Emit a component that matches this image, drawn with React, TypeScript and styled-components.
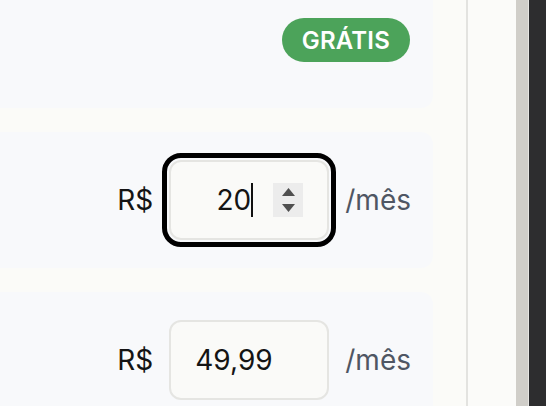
import React from "react";
import styled, { createGlobalStyle } from "styled-components";

const GlobalStyle = createGlobalStyle`
  html, body {
    margin: 0;
    padding: 0;
    background: #fbfbf8;
    overflow: hidden;
  }
  body {
    font-family: Inter, "Noto Sans", "Liberation Sans", sans-serif;
    -webkit-font-smoothing: antialiased;
  }
`;

const Shell = styled.div`
  display: flex;
  width: 546px;
  height: 406px;
  overflow: hidden;
  background: #fbfbf8;
`;

const Main = styled.main`
  flex: 1;
  min-width: 0;
  display: flex;
  flex-direction: column;
  gap: 24px;
  margin-top: -28px;
  padding-right: 33px;
`;

const Card = styled.section`
  margin-left: -24px;
  background: #f8f9fb;
  border-radius: 12px;
  padding: 28px 22px 28px 24px;
  display: flex;
  justify-content: flex-end;
  align-items: center;
`;

const Row = styled.div`
  height: 80px;
  display: flex;
  align-items: center;
  gap: 16px;
`;

const Badge = styled.span`
  display: inline-flex;
  align-items: center;
  height: 44px;
  box-sizing: border-box;
  margin-right: 1px;
  padding: 0 20px;
  border-radius: 999px;
  background: #4ca35a;
  color: #ffffff;
  font-size: 24px;
  font-weight: 600;
  letter-spacing: 0.2px;
`;

const Currency = styled.span`
  font-size: 28px;
  color: #141414;
`;

const Period = styled.span`
  font-size: 28px;
  color: #4f5663;
`;

const Field = styled.div<{ $focused?: boolean }>`
  box-sizing: border-box;
  width: 160px;
  height: 80px;
  display: flex;
  align-items: center;
  padding: 0 24px;
  border: 2px solid #e5e5e2;
  border-radius: 12px;
  background: #fafaf8;
  font-size: 28px;
  color: #141414;
  outline: ${(p) => (p.$focused ? "5px solid #000" : "none")};
  outline-offset: 2px;
`;

const Value = styled.span<{ $align?: "left" | "right" }>`
  flex: 1;
  text-align: ${(p) => p.$align ?? "left"};
`;

const Caret = styled.span`
  width: 2px;
  height: 34px;
  background: #111;
`;

const Spinner = styled.span`
  margin-left: 20px;
  width: 30px;
  height: 34px;
  background: #ececec;
  display: flex;
  flex-direction: column;
  align-items: center;
  justify-content: center;
  gap: 8px;
`;

const Aside = styled.aside`
  width: 48px;
  border-left: 2px solid #e3e3e0;
  background: #fbfbf9;
`;

const Track = styled.div`
  width: 12px;
  background: #d0cec9;
`;

const Dark = styled.div`
  width: 17px;
  border-left: 1px solid #e6e5e2;
  background: #2d2d2f;
`;

const Arrow = ({ up }: { up?: boolean }) => (
  <svg width="13" height="8" viewBox="0 0 13 8">
    <path d={up ? "M6.5 0 L13 8 L0 8 Z" : "M0 0 L13 0 L6.5 8 Z"} fill="#4f4f4f" />
  </svg>
);

const PriceRow = ({ value, focused }: { value: string; focused?: boolean }) => (
  <Row>
    <Currency>R$</Currency>
    <Field $focused={focused}>
      {focused ? (
        <>
          <Value $align="right">{value}</Value>
          <Caret />
          <Spinner>
            <Arrow up />
            <Arrow />
          </Spinner>
        </>
      ) : (
        <Value>{value}</Value>
      )}
    </Field>
    <Period>/mês</Period>
  </Row>
);

export default function App() {
  return (
    <>
      <GlobalStyle />
      <Shell>
        <Main>
          <Card>
            <Row>
              <Badge>GRÁTIS</Badge>
            </Row>
          </Card>
          <Card>
            <PriceRow value="20" focused />
          </Card>
          <Card>
            <PriceRow value="49,99" />
          </Card>
        </Main>
        <Aside />
        <Track />
        <Dark />
      </Shell>
    </>
  );
}
